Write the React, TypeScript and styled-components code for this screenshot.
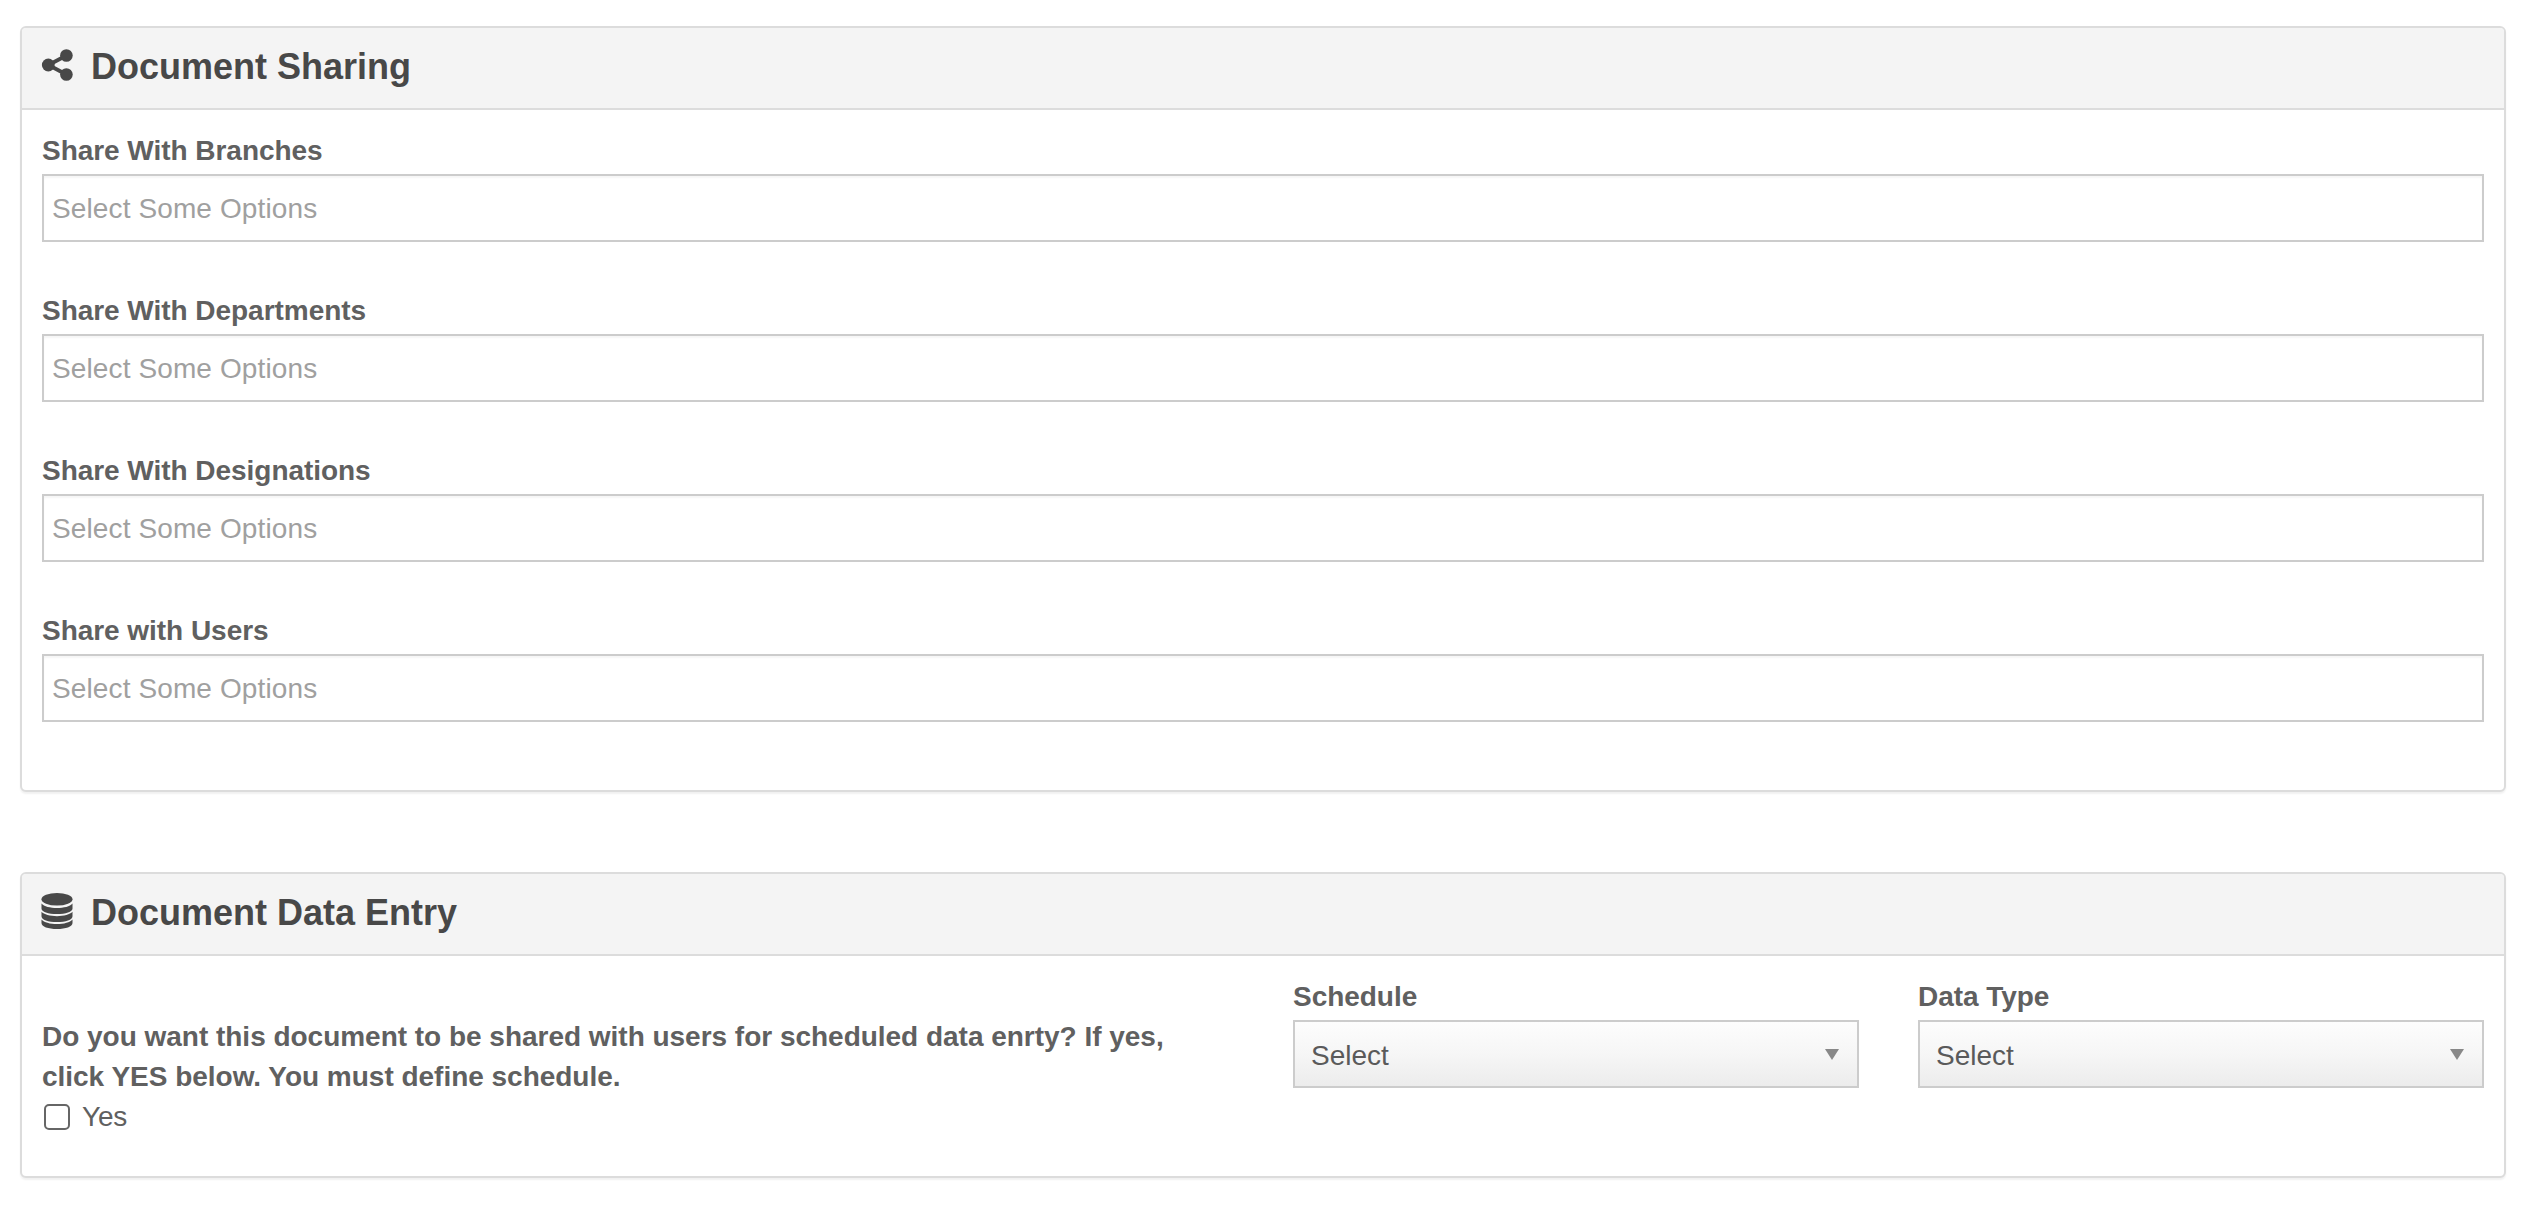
import React from "react";
import styled, { createGlobalStyle } from "styled-components";

const GlobalStyle = createGlobalStyle`
	html, body {
		margin: 0;
		padding: 0;
		background: #fff;
	}
	body {
		font-family: "Liberation Sans", Arial, sans-serif;
		color: #606060;
	}
	* {
		box-sizing: border-box;
	}
`;

const shareFields = [
	"Share With Branches",
	"Share With Departments",
	"Share With Designations",
	"Share with Users",
];

const ShareIcon = () => (
	<svg width="32" height="32" viewBox="0 0 32 32" fill="currentColor">
		<path d="M7.5 16 25.4 6.5M7.5 16 25.4 25.5" stroke="currentColor" strokeWidth="3.8" fill="none" />
		<circle cx="25.4" cy="6.5" r="6.3" />
		<circle cx="7.3" cy="16" r="6.4" />
		<circle cx="25.4" cy="25.5" r="6.3" />
	</svg>
);

const DatabaseIcon = () => (
	<svg width="32" height="36" viewBox="-0.5 0 33 36" preserveAspectRatio="none" fill="currentColor">
		<ellipse cx="16" cy="6.3" rx="16" ry="6.3" />
		<path d="M0 10.5C2.5 13.5 9 15 16 15S29.5 13.5 32 10.5V15.5C32 19 25 21 16 21S0 19 0 15.5Z" />
		<path d="M0 18.8C2.5 21.6 9 23.2 16 23.2S29.5 21.6 32 18.8V23.2C32 26.8 25 29 16 29S0 26.8 0 23.2Z" />
		<path d="M0 26.4C2.5 29.2 9 31 16 31S29.5 29.2 32 26.4V30C32 33.8 25 36 16 36S0 33.8 0 30Z" />
	</svg>
);

const App: React.FC = () => {
	return (
		<>
			<GlobalStyle />
			<Page>
				<Panel>
					<PanelHeader>
						<IconSlot><ShareIcon /></IconSlot>
						<PanelTitle>Document Sharing</PanelTitle>
					</PanelHeader>
					<SharingBody>
						{shareFields.map((label) => (
							<Field key={label}>
								<Label>{label}</Label>
								<ChosenInput>Select Some Options</ChosenInput>
							</Field>
						))}
					</SharingBody>
				</Panel>
				<Panel>
					<PanelHeader>
						<IconSlot><DatabaseIcon /></IconSlot>
						<PanelTitle>Document Data Entry</PanelTitle>
					</PanelHeader>
					<EntryBody>
						<Question>
							<QuestionText>
								Do you want this document to be shared with users for scheduled data enrty? If yes, click YES below. You must define schedule.
							</QuestionText>
							<CheckRow>
								<CheckBox />
								<CheckLabel>Yes</CheckLabel>
							</CheckRow>
						</Question>
						<SelectField>
							<Label>Schedule</Label>
							<SelectBox>Select<Caret /></SelectBox>
						</SelectField>
						<SelectField>
							<Label>Data Type</Label>
							<SelectBox>Select<Caret /></SelectBox>
						</SelectField>
					</EntryBody>
				</Panel>
			</Page>
		</>
	);
};

const Page = styled.div`
	display: flex;
	flex-direction: column;
	gap: 80px;
	padding: 26px 22px 34px 20px;
`;
const Panel = styled.section`
	border: 2px solid #dcdcdc;
	border-radius: 6px;
	box-shadow: 0 2px 2px rgba(0, 0, 0, 0.06);
	background: #fff;
`;
const PanelHeader = styled.header`
	display: flex;
	align-items: center;
	height: 82px;
	padding: 0 19px 3px;
	background: #f4f4f4;
	border-bottom: 2px solid #dcdcdc;
	border-radius: 4px 4px 0 0;
	color: #484848;
`;
const IconSlot = styled.span`
	display: flex;
	width: 50px;
	margin-top: -3px;
	color: #484848;
`;
const PanelTitle = styled.h2`
	margin: 0;
	font-size: 36px;
	font-weight: 700;
	line-height: 40px;
	color: #484848;
`;
const SharingBody = styled.div`
	display: flex;
	flex-direction: column;
	gap: 48px;
	padding: 20px 20px 68px;
`;
const Field = styled.div`
	display: flex;
	flex-direction: column;
`;
const Label = styled.label`
	display: block;
	padding-top: 1px;
	font-size: 28px;
	font-weight: 700;
	line-height: 40px;
	letter-spacing: -0.04px;
	margin-bottom: 3px;
	color: #606060;
`;
const ChosenInput = styled.div`
	height: 68px;
	padding: 2px 8px 0;
	display: flex;
	align-items: center;
	border: 2px solid #ccc;
	background: #fff;
	box-shadow: inset 0 2px 2px rgba(0, 0, 0, 0.04);
	font-size: 28px;
	letter-spacing: 0.12px;
	color: #a0a0a0;
`;
const EntryBody = styled.div`
	display: grid;
	grid-template-columns: 1fr 566px 566px;
	column-gap: 59px;
	padding: 20px 20px 39px;
`;
const Question = styled.div`
	padding-top: 41px;
`;
const QuestionText = styled.p`
	margin: 0;
	max-width: 1170px;
	font-size: 28px;
	font-weight: 700;
	line-height: 40px;
	letter-spacing: -0.02px;
	color: #606060;
`;
const CheckRow = styled.div`
	display: flex;
	align-items: center;
	gap: 12px;
	height: 40px;
	padding-left: 2px;
`;
const CheckBox = styled.span`
	width: 26px;
	height: 26px;
	border: 2px solid #666;
	border-radius: 5px;
	background: #fff;
`;
const CheckLabel = styled.span`
	font-size: 28px;
	letter-spacing: -0.2px;
	color: #606060;
`;
const SelectField = styled.div`
	display: flex;
	flex-direction: column;
`;
const SelectBox = styled.div`
	position: relative;
	height: 68px;
	padding: 4px 16px 0;
	display: flex;
	align-items: center;
	border: 2px solid #ccc;
	background: linear-gradient(#fdfdfd, #f6f6f6 50%, #ececec);
	font-size: 28px;
	color: #5a5a5a;
`;
const Caret = styled.span`
	position: absolute;
	right: 18px;
	top: 27px;
	width: 0;
	height: 0;
	border-left: 7.5px solid transparent;
	border-right: 7.5px solid transparent;
	border-top: 11px solid #888;
`;

export default App;
